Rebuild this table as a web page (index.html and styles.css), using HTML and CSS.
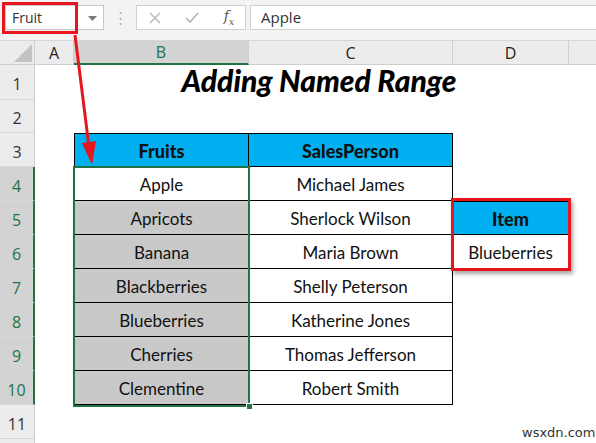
FILE: index.html
```html
<!DOCTYPE html>
<html>
<head>
<meta charset="utf-8">
<link rel="stylesheet" href="styles.css">
</head>
<body>
<div class="app">
  <div class="formula-bar">
    <div class="namebox"><span class="name">Fruit</span><svg class="caret" width="9" height="5" viewBox="0 0 9 5"><path d="M0 0h9L4.5 5z" fill="#7a7a7a"/></svg></div>
    <div class="dots">⋮</div>
    <div class="fx-group">
      <svg width="12" height="12" viewBox="0 0 12 12"><path d="M1 1l10 10M11 1L1 11" stroke="#b5b5b5" stroke-width="1.4"/></svg>
      <svg width="14" height="12" viewBox="0 0 14 12"><path d="M1 6l4 4 8-9" stroke="#b5b5b5" stroke-width="1.6" fill="none"/></svg>
      <span class="fx">f<sub>x</sub></span>
    </div>
    <div class="formula-input">Apple</div>
  </div>

  <div class="sheet">
    <div class="corner"><svg width="18" height="18" viewBox="0 0 18 18"><path d="M18 0V18H0z" fill="#c3c3c3"/></svg></div>
    <div class="colhdr">A</div>
    <div class="colhdr sel">B</div>
    <div class="colhdr">C</div>
    <div class="colhdr">D</div>
    <div class="colhdr last"></div>

    <div class="rowhdr">1</div>
    <div class="title">Adding Named Range</div>
    <div class="cell"></div>

    <div class="rowhdr">2</div>
    <div class="cell"></div><div class="cell"></div><div class="cell"></div><div class="cell"></div><div class="cell"></div>

    <div class="rowhdr">3</div>
    <div class="cell"></div>
    <div class="cell th first">Fruits</div>
    <div class="cell th">SalesPerson</div>
    <div class="cell"></div><div class="cell"></div>

    <div class="rowhdr sel">4</div>
    <div class="cell"></div>
    <div class="cell td first">Apple</div>
    <div class="cell td">Michael James</div>
    <div class="cell"></div><div class="cell"></div>

    <div class="rowhdr sel">5</div>
    <div class="cell"></div>
    <div class="cell td first gray">Apricots</div>
    <div class="cell td">Sherlock Wilson</div>
    <div class="cell th dcell top">Item</div>
    <div class="cell"></div>

    <div class="rowhdr sel">6</div>
    <div class="cell"></div>
    <div class="cell td first gray">Banana</div>
    <div class="cell td">Maria Brown</div>
    <div class="cell td dcell">Blueberries</div>
    <div class="cell"></div>

    <div class="rowhdr sel">7</div>
    <div class="cell"></div>
    <div class="cell td first gray">Blackberries</div>
    <div class="cell td">Shelly Peterson</div>
    <div class="cell"></div><div class="cell"></div>

    <div class="rowhdr sel">8</div>
    <div class="cell"></div>
    <div class="cell td first gray">Blueberries</div>
    <div class="cell td">Katherine Jones</div>
    <div class="cell"></div><div class="cell"></div>

    <div class="rowhdr sel">9</div>
    <div class="cell"></div>
    <div class="cell td first gray">Cherries</div>
    <div class="cell td">Thomas Jefferson</div>
    <div class="cell"></div><div class="cell"></div>

    <div class="rowhdr sel">10</div>
    <div class="cell"></div>
    <div class="cell td first gray">Clementine</div>
    <div class="cell td">Robert Smith</div>
    <div class="cell"></div><div class="cell"></div>

    <div class="rowhdr">11</div>
    <div class="cell"></div><div class="cell"></div><div class="cell"></div><div class="cell"></div><div class="cell"></div>

    <div class="rowhdr"></div>
    <div class="cell"></div><div class="cell"></div><div class="cell"></div><div class="cell"></div><div class="cell"></div>
  </div>

  <div class="selection"><div class="handle"></div></div>
  <div class="redbox namebox-mark"></div>
  <div class="redbox item-mark"></div>
  <svg class="arrow" width="40" height="140" viewBox="0 0 40 140">
    <line x1="4" y1="0" x2="18" y2="112" stroke="#e8161c" stroke-width="3"/>
    <path d="M11 108 L25 106 L21 130 Z" fill="#e8161c"/>
  </svg>
  <div class="watermark">wsxdn.com</div>
</div>
</body>
</html>
```

FILE: styles.css
```css
* { box-sizing: border-box; }
html, body { margin: 0; padding: 0; background: #ffffff; }
body { width: 596px; height: 443px; overflow: hidden; font-family: Lato, "Open Sans", sans-serif; }
.app { position: relative; width: 596px; height: 443px; overflow: hidden; }

.formula-bar {
  height: 41px;
  background: #f3f3f3;
  border-bottom: 1px solid #d6d6d6;
  display: flex;
  align-items: flex-start;
  padding: 5px 0 0 5px;
}
.namebox {
  width: 99px; height: 25px;
  background: #fff;
  border: 1px solid #c8c8c8;
  display: flex; align-items: center; justify-content: space-between;
  padding: 0 6px 0 6px;
  font-family: "Open Sans", sans-serif; font-size: 14px; color: #333;
}
.caret { margin-top: 1px; }
.dots { width: 32px; text-align: center; color: #b0b0b0; font-size: 15px; line-height: 25px; }
.fx-group {
  width: 110px; height: 25px;
  background: #fff;
  border: 1px solid #d0d0d0;
  display: flex; align-items: center; justify-content: space-between;
  padding: 0 11px 0 12px;
}
.fx { font-family: "DejaVu Serif", serif; font-style: italic; font-size: 14px; color: #555; line-height: 1; }
.fx sub { font-size: 9px; }
.formula-input {
  flex: 1; height: 25px; margin-left: 4px;
  background: #fff;
  border: 1px solid #d0d0d0; border-right: none;
  padding-left: 10px;
  font-family: "Open Sans", sans-serif; font-size: 15px; line-height: 23px; color: #333;
}

.sheet {
  display: grid;
  grid-template-columns: 35px 39px 175px 204px 116px 1fr;
  grid-template-rows: 24px 35px 33px repeat(10, 34px);
}
.corner { background: #ececec; border-right: 1px solid #cfcfcf; border-bottom: 1px solid #cfcfcf; display: flex; align-items: flex-end; justify-content: flex-end; padding: 0 2px 2px 0; }
.colhdr {
  background: #ececec;
  border-right: 1px solid #cfcfcf;
  border-bottom: 1px solid #cfcfcf;
  font-family: "Open Sans", sans-serif; font-size: 16px; color: #222;
  display: flex; align-items: center; justify-content: center;
}
.colhdr.sel { background: #d3d3d3; color: #217346; border-bottom: 2px solid #217346; }
.colhdr.last { border-right: none; }
.rowhdr {
  background: #ececec;
  border-right: 1px solid #cfcfcf;
  border-bottom: 1px solid #d8d8d8;
  font-family: "Open Sans", sans-serif; font-size: 16px; color: #333;
  display: flex; align-items: center; justify-content: center;
  padding-top: 4px;
}
.rowhdr.sel { background: #d3d3d3; color: #217346; border-right: 2px solid #217346; }

.title {
  grid-column: 2 / 6;
  display: flex; align-items: center; justify-content: center;
  font-family: Lato, sans-serif; font-weight: 900; font-style: italic; font-size: 30px; color: #000;
  padding-left: 34px; padding-bottom: 5px;
}
.cell { background: #fff; }
.td, .th {
  display: flex; align-items: center; justify-content: center;
  font-family: Lato, sans-serif; font-size: 17px; color: #111;
  border-right: 1px solid #000; border-bottom: 1px solid #000;
  white-space: nowrap;
  padding-top: 2px;
}
.th { background: #00b0f0; font-weight: 900; border-top: 1px solid #000; font-size: 18px; }
.first { border-left: 1px solid #000; }
.gray { background: #c9c9c9; }
.dcell { border-left: none; }
.dcell.top { border-top: 1px solid #000; }

.selection {
  position: absolute; left: 73px; top: 166px; width: 177px; height: 241px;
  border: 2px solid #217346;
}
.handle { position: absolute; right: -5px; bottom: -5px; width: 7px; height: 7px; background: #217346; border: 1px solid #fff; }
.redbox { position: absolute; border: 3px solid #e8161c; }
.namebox-mark { left: 2px; top: 2px; width: 76px; height: 32px; }
.item-mark { left: 451px; top: 198px; width: 120px; height: 73px; box-shadow: 2px 3px 4px rgba(0,0,0,0.35); }
.arrow { position: absolute; left: 71px; top: 35px; }
.watermark { position: absolute; left: 522px; top: 425px; font-family: "DejaVu Sans", sans-serif; font-size: 13px; color: #333; }
```
